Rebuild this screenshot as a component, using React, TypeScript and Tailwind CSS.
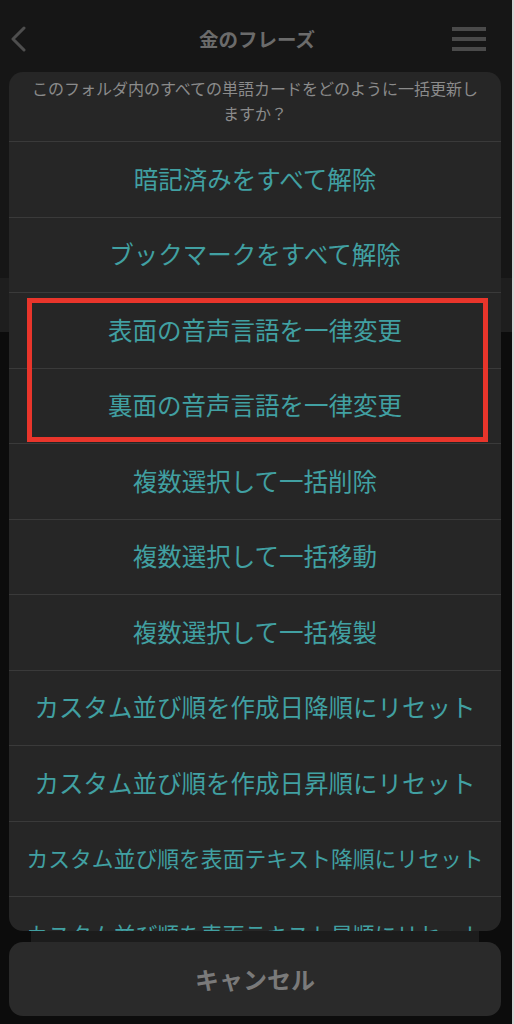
import React from 'react';

const actions: { label: string; size?: string }[] = [
    { label: '暗記済みをすべて解除' },
    { label: 'ブックマークをすべて解除' },
    { label: '表面の音声言語を一律変更' },
    { label: '裏面の音声言語を一律変更' },
    { label: '複数選択して一括削除' },
    { label: '複数選択して一括移動' },
    { label: '複数選択して一括複製' },
    { label: 'カスタム並び順を作成日降順にリセット' },
    { label: 'カスタム並び順を作成日昇順にリセット' },
    { label: 'カスタム並び順を表面テキスト降順にリセット', size: 'text-[21.8px]' },
    { label: 'カスタム並び順を表面テキスト昇順にリセット', size: 'text-[21.8px]' },
];

export default function App() {
    return (
        <div className="relative w-[514px] h-[1024px] overflow-hidden bg-[#0c0c0c] border-r-2 border-[#d6d6d6] font-['Noto_Sans_CJK_JP','Noto_Sans',sans-serif]">
            {/* page behind the sheet */}
            <div className="flex flex-col">
                <header className="h-[120px] bg-[#161616] grid grid-cols-[1fr_auto_1fr] items-start px-[10px] pt-[26px]">
                    <svg width="18" height="26" viewBox="0 0 18 26" fill="none" stroke="#4e4e4e" strokeWidth="3" strokeLinecap="round" strokeLinejoin="round">
                        <path d="M14 2 L3 13 L14 24" />
                    </svg>
                    <h1 className="text-[19.5px] leading-[26px] font-bold text-[#6b6b6b] pl-[2px]">金のフレーズ</h1>
                    <div className="flex flex-col items-end gap-[6.5px] pt-[1px] pr-[16px]">
                        <span className="block w-[34px] h-[3.5px] bg-[#4a4a4a]" />
                        <span className="block w-[34px] h-[3.5px] bg-[#4a4a4a]" />
                        <span className="block w-[34px] h-[3.5px] bg-[#4a4a4a]" />
                    </div>
                </header>
                <div className="h-[158px] bg-[#161616]" />
                <div className="h-[54px] bg-[#1e1e1e]" />
            </div>

            {/* action sheet */}
            <div className="absolute inset-0 flex flex-col pl-[9px] pr-[11px] pt-[72px]">
                <div className="h-[859px] rounded-[14px] bg-[#262626] overflow-hidden flex flex-col flex-shrink-0">
                    <p className="pt-[4px] pb-[15px] px-[18px] text-center text-[16px] leading-[25px] text-[#8b8b8b]">
                        このフォルダ内のすべての単語カードをどのように一括更新し
                        <br />
                        ますか？
                    </p>
                    {actions.map((a) => (
                        <div
                            key={a.label}
                            className={`h-[75.5px] flex-shrink-0 border-t border-[#3a3a3a] flex items-center justify-center whitespace-nowrap text-[#41a0a2] ${a.size ?? 'text-[24.5px]'}`}
                        >
                            {a.label}
                        </div>
                    ))}
                </div>
                <div className="mx-[22px] h-[11px] bg-[#1c1c1c] flex-shrink-0" />
                <button className="h-[74px] rounded-[14px] bg-[#2a2a2a] text-[24px] font-bold text-[#7a7a7a] flex items-center justify-center flex-shrink-0">
                    キャンセル
                </button>
            </div>

            {/* annotation */}
            <div className="absolute left-[27px] top-[298px] w-[461px] h-[144px] border-[5px] border-[#e8352b]" />
        </div>
    );
}
